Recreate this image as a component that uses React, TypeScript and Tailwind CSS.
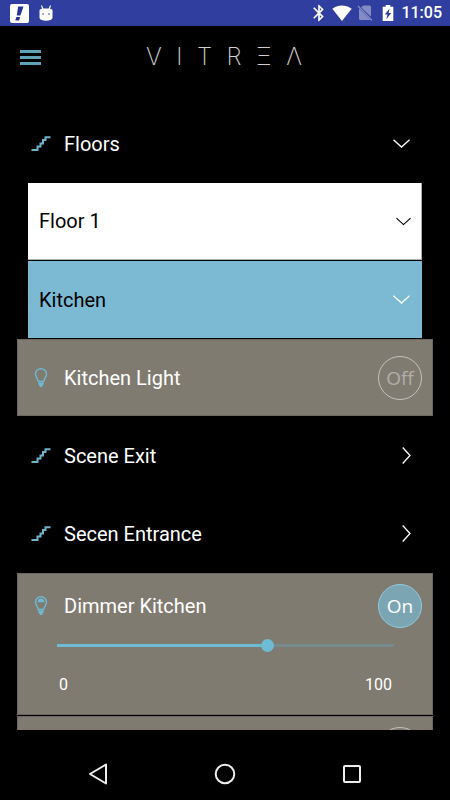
import React, { useState } from 'react';
import { MdBluetooth, MdSignalWifi4Bar } from 'react-icons/md';
import { clsx } from 'clsx';

const StairsIcon = () => (
  <svg viewBox="0 0 20 20" className="size-5 shrink-0" fill="none" stroke="#6db3cb" strokeWidth="2">
    <path d="M0.5 16H6.500V12.500H9.500V9.500H12V6H14.500V3.200H19.500" />
  </svg>
);

const BulbIcon = ({ lit = false }: { lit?: boolean }) => (
  <svg viewBox="0 0 20 20" className="size-5 shrink-0" fill="none" stroke="#6fb9d2" strokeWidth="1.4">
    <path d="M7.400 13.500C7.200 10.800 4.500 9.400 4.500 6a5.500 5.300 0 0 1 11 0c0 3.400-2.700 4.800-2.900 7.500z" />
    <path d="M7.200 15.200h5.600M7.600 16.800h4.800M8.800 18.300h2.400" />
    {lit && <path d="M6.600 6.200a3.400 3.600 0 0 1 6.800 0z" fill="#6fb9d2" stroke="none" />}
  </svg>
);

const ChevronDown = ({ small = false }: { small?: boolean }) => (
  <svg viewBox="0 0 17 9" className={clsx('h-[9px]', small ? 'w-[15px]' : 'w-[17px]')} fill="none" stroke="currentColor" strokeWidth="1.3">
    <path d="M0.5 0.7L8.5 8l8-7.3" />
  </svg>
);

const ChevronRight = () => (
  <svg viewBox="0 0 9 17" className="h-[17px] w-[9px]" fill="none" stroke="currentColor" strokeWidth="1.3">
    <path d="M0.7 0.5L8 8.5l-7.3 8" />
  </svg>
);

const StatusBar = () => (
  <div className="flex h-[26px] shrink-0 items-center bg-[#303f9f] pr-2 pl-[10px] text-white">
    <svg viewBox="0 0 19 19" className="size-[19px]">
      <rect width="19" height="19" rx="2" fill="#fff" />
      <path d="M8.2 2.5h5.3L10.4 11.5H6.8zM6.3 13h3.8l-1 3.5H5.3z" fill="#26349a" />
    </svg>
    <svg viewBox="0 0 14 17" className="ml-[10px] h-[17px] w-[14px]">
      <path d="M2.500 0.500L4 4.500M11.500 0.500L10 4.500" stroke="#fff" strokeWidth="1.100" />
      <path d="M0.500 5Q1.500 3.500 4 3.500h6Q12.500 3.500 13.500 5v8Q12.500 15.800 7 15.800T0.500 13z" fill="#fff" />
      <circle cx="4" cy="9" r="0.800" fill="#303f9f" />
      <circle cx="10" cy="9" r="0.800" fill="#303f9f" />
    </svg>
    <div className="ml-auto flex items-center gap-[3px]">
      <MdBluetooth size={20} />
      <MdSignalWifi4Bar size={20} />
      <svg viewBox="0 0 20 20" className="size-5 opacity-40" fill="#fff">
        <path d="M8.300 2.500H14.500Q16 2.500 16 4v9.800L6.200 4.500z" />
        <path d="M4 5.500L15.500 17H5.500Q4 17 4 15.500z" />
        <path d="M3 3L17 17.500" stroke="#fff" strokeWidth="1.300" />
      </svg>
      <svg viewBox="0 0 20 20" className="size-5">
        <path d="M7.700 2h4.600v1.800H15.300V18H4.700V3.800h3z" fill="#fff" />
        <path d="M11.600 5.500L6.800 11.500h2.600L8.400 16.300l4.800-6.200h-2.600z" fill="#303f9f" />
      </svg>
      <span className="text-base leading-5 font-medium">11:05</span>
    </div>
  </div>
);

const Header = () => (
  <header className="relative flex h-[62px] shrink-0 items-center justify-center">
    <button aria-label="Menu" className="absolute left-5 flex w-[21px] flex-col gap-[3px]">
      <span className="h-[3px] bg-[#5fa3b8]" />
      <span className="h-[3px] bg-[#5fa3b8]" />
      <span className="h-[3px] bg-[#5fa3b8]" />
    </button>
    <h1 className="mr-[2px] flex w-[156px] justify-between font-['Inter',sans-serif] text-2xl leading-8 font-extralight text-[#cfcfcf]">
      {['V', 'I', 'T', 'R', 'Ξ', 'Λ'].map((letter) => (
        <span key={letter}>{letter}</span>
      ))}
    </h1>
  </header>
);

interface PowerButtonProps {
  on: boolean;
  label: string;
  onToggle: () => void;
}

const PowerButton: React.FC<PowerButtonProps> = ({ on, label, onToggle }) => (
  <button
    aria-label={`${label} ${on ? 'On' : 'Off'}`}
    onClick={onToggle}
    className={clsx(
      "flex size-11 shrink-0 items-center justify-center rounded-full border font-['Open_Sans',sans-serif] text-[19px] leading-6",
      on ? 'border-[#8ccbe0] bg-[#7ca5b3] text-white' : 'border-[#c4c2bf] text-[#b0aeab]'
    )}
  >
    {on ? 'On' : 'Off'}
  </button>
);

const SceneRow = ({ name, open = false }: { name: string; open?: boolean }) => (
  <button className={clsx('flex h-[77px] w-full items-center gap-[13px] pl-[14px] text-left', open ? 'pr-[23px]' : 'pr-[22px]')}>
    <StairsIcon />
    <span className="flex-1">{name}</span>
    {open ? <ChevronDown /> : <ChevronRight />}
  </button>
);

const LightCard = ({ name }: { name: string }) => {
  const [on, setOn] = useState(false);
  return (
    <div className="flex h-[77px] items-center gap-[13px] border border-[#6c685f] bg-[#807b70] pr-[10px] pl-[13px]">
      <BulbIcon />
      <span className="flex-1">{name}</span>
      <PowerButton on={on} label={name} onToggle={() => setOn(!on)} />
    </div>
  );
};

const DimmerCard = ({ name }: { name: string }) => {
  const [on, setOn] = useState(true);
  const [level, setLevel] = useState(63);
  return (
    <div className="border border-[#6c685f] bg-[#807b70] pt-[10px] pr-[10px] pb-[19px] pl-[13px]">
      <div className="flex items-center gap-[13px]">
        <BulbIcon lit />
        <span className="flex-1">{name}</span>
        <PowerButton on={on} label={name} onToggle={() => setOn(!on)} />
      </div>
      <div className="mt-[11px] pr-7 pl-[26px]">
        <input
          type="range"
          min={0}
          max={100}
          value={level}
          onChange={(e) => setLevel(Number(e.target.value))}
          aria-label={`${name} level`}
          className="block h-[13px] w-full appearance-none bg-[length:100%_3px] bg-center bg-no-repeat outline-none [&::-webkit-slider-thumb]:size-[13px] [&::-webkit-slider-thumb]:appearance-none [&::-webkit-slider-thumb]:rounded-full [&::-webkit-slider-thumb]:bg-[#6dbcd3]"
          style={{ backgroundImage: `linear-gradient(to right, #6dbcd3 ${level}%, #758b8c ${level}%)` }}
        />
        <div className="mt-[23px] flex justify-between px-[2px] text-base leading-5">
          <span>0</span>
          <span>100</span>
        </div>
      </div>
    </div>
  );
};

export default function App() {
  return (
    <div className="flex h-screen flex-col bg-black font-['Roboto',sans-serif] text-xl leading-6 text-white">
      <StatusBar />
      <Header />

      <main className="flex min-h-0 flex-1 flex-col gap-px overflow-hidden px-[17px] pt-[17px]">
        <div className="shrink-0">
          <SceneRow name="Floors" open />
        </div>
        <button className="mx-[11px] flex h-[77px] shrink-0 items-center justify-between border-r border-b border-[#b0b0b0] bg-white pr-[10px] pl-[11px] text-black">
          Floor 1
          <ChevronDown small />
        </button>
        <button className="mx-[11px] flex h-[77px] shrink-0 items-center justify-between bg-[#7cbad3] pr-3 pl-[11px]">
          <span className="text-black">Kitchen</span>
          <ChevronDown />
        </button>
        <div className="shrink-0">
          <LightCard name="Kitchen Light" />
        </div>
        <div className="shrink-0">
          <SceneRow name="Scene Exit" />
        </div>
        <div className="shrink-0">
          <SceneRow name="Secen Entrance" />
        </div>
        <div className="shrink-0">
          <DimmerCard name="Dimmer Kitchen" />
        </div>
        {/* top of the next device card, cut by the end of the list */}
        <div className="flex shrink-0 justify-end border border-[#6c685f] bg-[#807b70] p-[10px]">
          <button aria-label="Toggle" className="size-11 rounded-full border border-[#c4c2bf]" />
        </div>
      </main>

      <nav className="mt-[17px] flex h-[53px] shrink-0 items-center justify-between px-[88px]">
        <button aria-label="Back">
          <svg viewBox="0 0 20 22" className="h-[22px] w-5" fill="none" stroke="#eee" strokeWidth="2" strokeLinejoin="round">
            <path d="M18 1.500v19L2 11z" />
          </svg>
        </button>
        <button aria-label="Home">
          <svg viewBox="0 0 22 22" className="size-[22px]" fill="none" stroke="#eee" strokeWidth="2">
            <circle cx="11" cy="11" r="9.300" />
          </svg>
        </button>
        <button aria-label="Recent apps">
          <svg viewBox="0 0 20 20" className="size-5" fill="none" stroke="#eee" strokeWidth="2">
            <rect x="2" y="2" width="16" height="16" rx="1" />
          </svg>
        </button>
      </nav>
    </div>
  );
}
